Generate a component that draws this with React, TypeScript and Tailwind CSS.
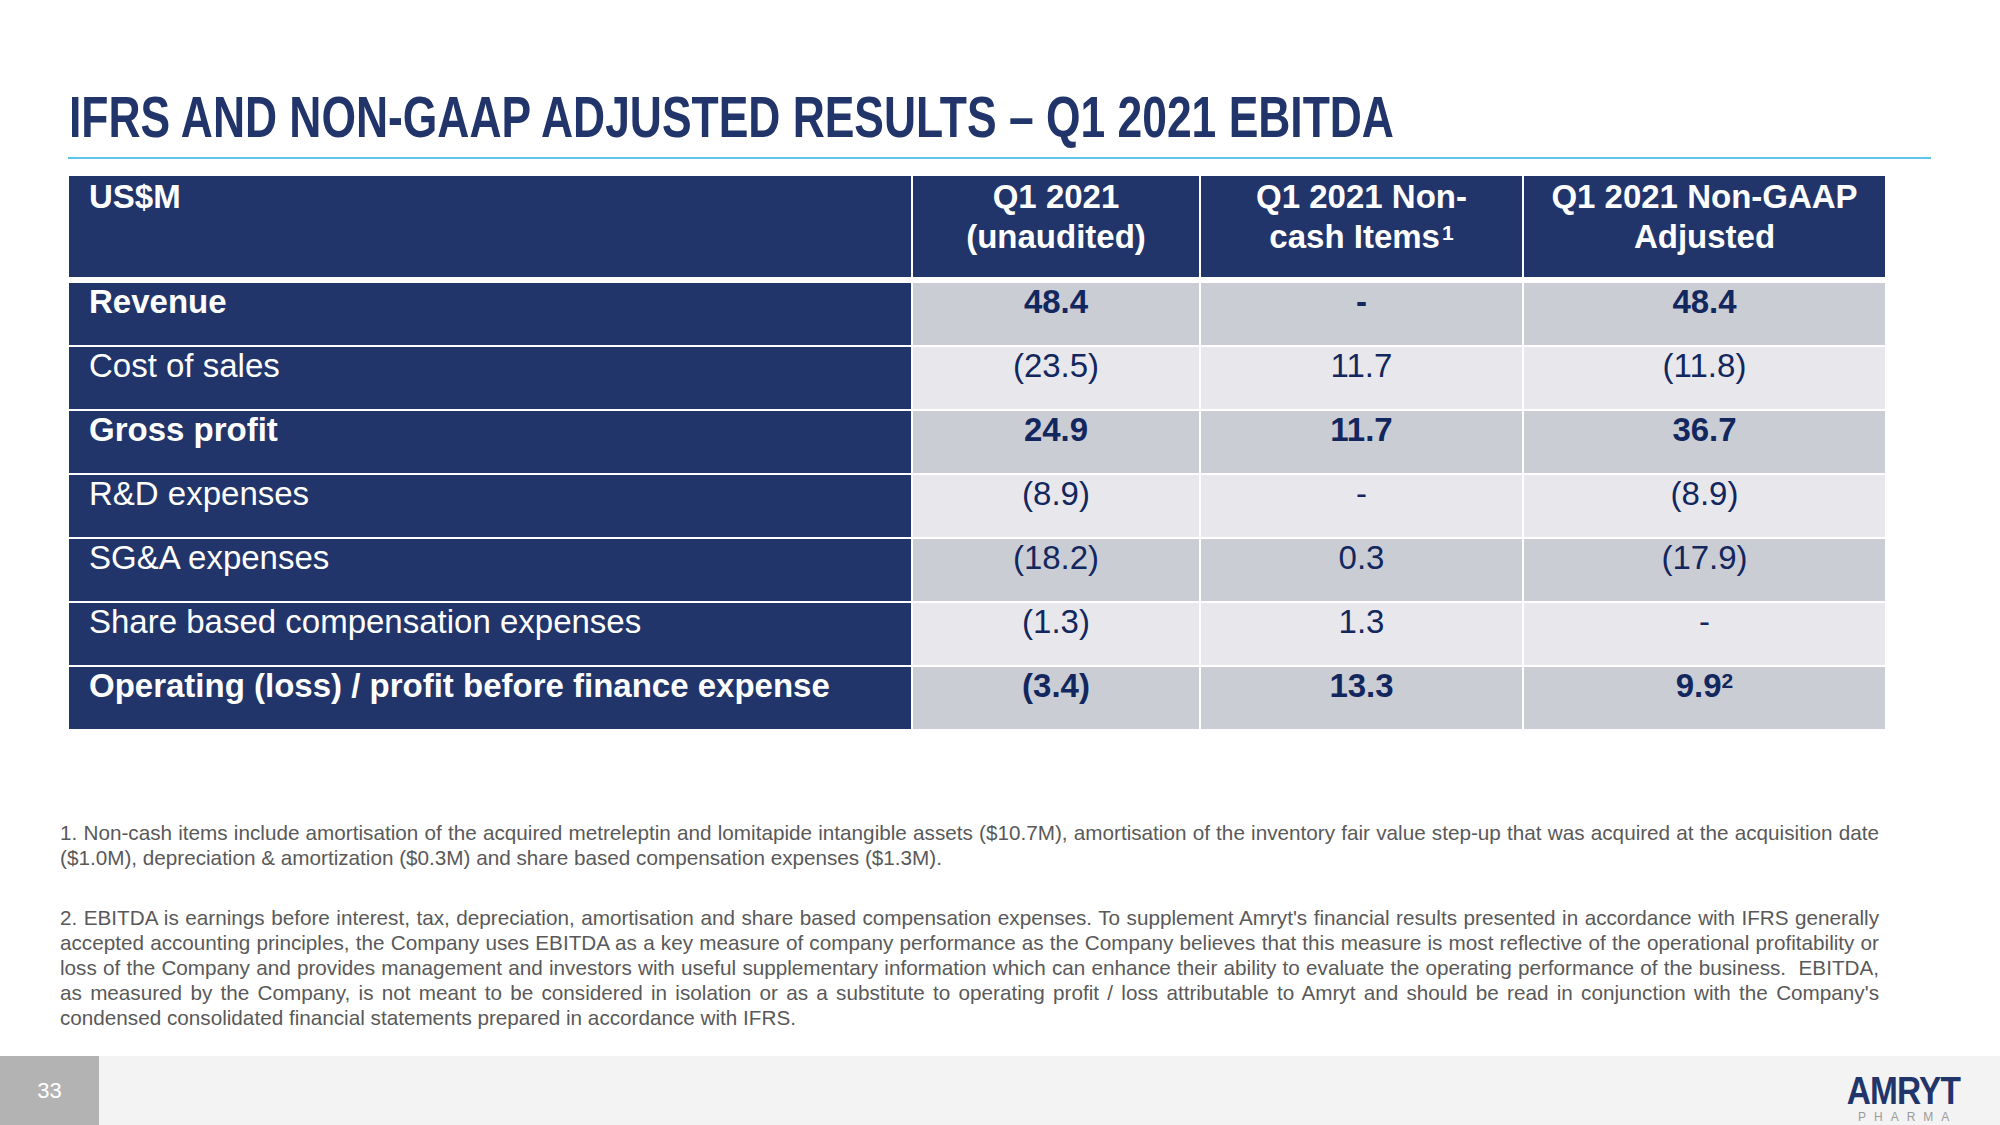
const navy = "bg-[#22356b]";

type Row = {
  label: string;
  values: [string, string, string];
  bold: boolean;
  dark: boolean;
  sup?: string;
};

const rows: Row[] = [
  { label: "Revenue", values: ["48.4", "-", "48.4"], bold: true, dark: true },
  { label: "Cost of sales", values: ["(23.5)", "11.7", "(11.8)"], bold: false, dark: false },
  { label: "Gross profit", values: ["24.9", "11.7", "36.7"], bold: true, dark: true },
  { label: "R&D expenses", values: ["(8.9)", "-", "(8.9)"], bold: false, dark: false },
  { label: "SG&A expenses", values: ["(18.2)", "0.3", "(17.9)"], bold: false, dark: true },
  { label: "Share based compensation expenses", values: ["(1.3)", "1.3", "-"], bold: false, dark: false },
  {
    label: "Operating (loss) / profit before finance expense",
    values: ["(3.4)", "13.3", "9.9"],
    bold: true,
    dark: true,
    sup: "2",
  },
];

const grid = "grid grid-cols-[842px_286px_321px_361px] gap-x-[2px]";

// footnote lines as laid out on the slide; all but the last line of each note are justified
const note1 = [
  "1. Non-cash items include amortisation of the acquired metreleptin and lomitapide intangible assets ($10.7M), amortisation of the inventory fair value step-up that was acquired at the acquisition date",
  "($1.0M), depreciation & amortization ($0.3M) and share based compensation expenses ($1.3M).",
];
const note2 = [
  "2. EBITDA is earnings before interest, tax, depreciation, amortisation and share based compensation expenses. To supplement Amryt's financial results presented in accordance with IFRS generally",
  "accepted accounting principles, the Company uses EBITDA as a key measure of company performance as the Company believes that this measure is most reflective of the operational profitability or",
  "loss of the Company and provides management and investors with useful supplementary information which can enhance their ability to evaluate the operating performance of the business.\u00a0 EBITDA,",
  "as measured by the Company, is not meant to be considered in isolation or as a substitute to operating profit / loss attributable to Amryt and should be read in conjunction with the Company's",
  "condensed consolidated financial statements prepared in accordance with IFRS.",
];

function Note({ lines, className }: { lines: string[]; className?: string }) {
  return (
    <div className={className}>
      {lines.map((line, i) => (
        <span
          key={i}
          className={
            i < lines.length - 1
              ? "block whitespace-nowrap text-justify [text-align-last:justify]"
              : "block whitespace-nowrap"
          }
        >
          {line}
        </span>
      ))}
    </div>
  );
}

export default function App() {
  return (
    <div className="relative flex h-[1125px] w-[2000px] flex-col overflow-hidden bg-white font-['Liberation_Sans',Arial,sans-serif]">
      {/* title */}
      <div className="pl-[69px] pt-[85px]">
        <h1 className="inline-block origin-left scale-x-[0.779] whitespace-nowrap text-[57px] font-bold leading-[64px] text-[#22356b]">
          IFRS AND NON-GAAP ADJUSTED RESULTS – Q1 2021 EBITDA
        </h1>
      </div>
      <div className="ml-[68px] mt-[8px] h-[2px] w-[1863px] bg-[#5fc4ea]" />

      {/* table */}
      <div className="ml-[69px] mt-[17px] flex w-[1816px] flex-col text-[33px] leading-[40px]">
        <div className={`${grid} h-[101px] font-bold text-white`}>
          <div className={`${navy} pl-[20px] pt-[1px]`}>US$M</div>
          <div className={`${navy} pt-[1px] text-center`}>
            Q1 2021
            <br />
            (unaudited)
          </div>
          <div className={`${navy} pt-[1px] text-center`}>
            Q1 2021 Non-
            <br />
            cash Items<sup className="relative top-[5px] ml-[2px] align-top text-[21px] leading-none">1</sup>
          </div>
          <div className={`${navy} pt-[1px] text-center`}>
            Q1 2021 Non-GAAP
            <br />
            Adjusted
          </div>
        </div>

        <div className="mt-[6px] flex flex-col gap-y-[2px] leading-[38px]">
          {rows.map((row) => (
            <div key={row.label} className={`${grid} h-[62px]`}>
              <div
                className={`${navy} pl-[20px] text-white ${row.bold ? "font-bold" : "font-normal"}`}
              >
                {row.label}
              </div>
              {row.values.map((value, i) => (
                <div
                  key={i}
                  className={`text-center text-[#13275f] ${row.dark ? "bg-[#cbcdd5]" : "bg-[#e8e8ec]"} ${
                    row.bold ? "font-bold" : "font-normal"
                  }`}
                >
                  {value}
                  {i === 2 && row.sup ? (
                    <sup className="relative top-[3px] align-top text-[21px] leading-none">{row.sup}</sup>
                  ) : null}
                </div>
              ))}
            </div>
          ))}
        </div>
      </div>

      {/* footnotes */}
      <div className="ml-[60px] mt-[91px] w-[1819px] text-[20.7px] leading-[25px] text-[#595959]">
        <Note lines={note1} />
        <Note lines={note2} className="mt-[35px]" />
      </div>

      {/* footer */}
      <div className="mt-auto flex h-[69px] items-stretch bg-[#f3f3f3]">
        <div className="flex w-[99px] items-center justify-center bg-[#b3b3b3] text-[22px] text-white">33</div>
        <div className="ml-auto mr-[32px] flex flex-col items-center pt-[15px]">
          <span className="inline-block origin-center scale-x-[0.88] text-[38px] font-bold leading-[40px] tracking-[-1px] text-[#22356b]">
            AMRYT
          </span>
          <span className="mt-[1px] pl-[8px] text-[12px] leading-[11px] tracking-[8px] text-[#9a9a9a]">PHARMA</span>
        </div>
      </div>
    </div>
  );
}
